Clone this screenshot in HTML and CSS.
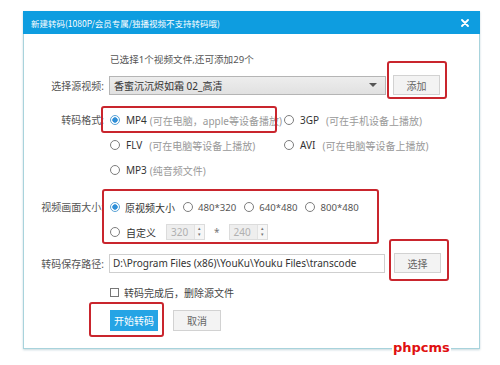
FILE: index.html
```html
<!DOCTYPE html>
<html lang="zh-CN">
<head>
  <meta charset="UTF-8" />
  <title>新建转码</title>
  <link rel="stylesheet" href="styles.css">
</head>
<body>

  <div class="dialog">
    <!-- Titelleiste -->
    <div class="titlebar">
      <span class="title">新建转码(1080P/会员专属/独播视频不支持转码哦)</span>
      <svg class="close" width="8" height="8" viewBox="0 0 8 8">
        <path d="M1 1 L7 7 M7 1 L1 7" stroke="#fff" stroke-width="1.8" stroke-linecap="round"/>
      </svg>
    </div>

    <div class="body">
      <div class="row info">
        <span class="label"></span>
        <span>已选择1个视频文件,还可添加29个</span>
      </div>

      <div class="row src">
        <span class="label">选择源视频:</span>
        <div class="select">
          <span>香蜜沉沉烬如霜 02_高清</span>
          <span class="caret"></span>
        </div>
        <button class="btn">添加</button>
      </div>

      <div class="row format">
        <span class="label">转码格式:</span>
        <div class="format-grid">
          <div class="opt"><span class="radio on"></span><span class="name">MP4</span><span class="hint">(可在电脑，apple等设备播放)</span></div>
          <div class="opt"><span class="radio"></span><span class="name">3GP</span><span class="hint wide">(可在手机设备上播放)</span></div>
          <div class="opt"><span class="radio"></span><span class="name">FLV</span><span class="hint wide">(可在电脑等设备上播放)</span></div>
          <div class="opt"><span class="radio"></span><span class="name">AVI</span><span class="hint wide">(可在电脑等设备上播放)</span></div>
          <div class="opt"><span class="radio"></span><span class="name">MP3</span><span class="hint">(纯音频文件)</span></div>
        </div>
      </div>

      <div class="row size">
        <span class="label">视频画面大小:</span>
        <div class="size-box">
          <div class="size-line">
            <div class="opt"><span class="radio on"></span><span class="name">原视频大小</span></div>
            <div class="opt"><span class="radio"></span><span class="dim">480*320</span></div>
            <div class="opt"><span class="radio"></span><span class="dim">640*480</span></div>
            <div class="opt"><span class="radio"></span><span class="dim">800*480</span></div>
          </div>
          <div class="size-line">
            <div class="opt"><span class="radio"></span><span class="name">自定义</span></div>
            <div class="spin"><span>320</span><span class="arrows">▴<br>▾</span></div>
            <span class="times">*</span>
            <div class="spin"><span>240</span><span class="arrows">▴<br>▾</span></div>
          </div>
        </div>
      </div>

      <div class="row path">
        <span class="label">转码保存路径:</span>
        <div class="input">D:\Program Files (x86)\YouKu\Youku Files\transcode</div>
        <button class="btn pick">选择</button>
      </div>

      <div class="row check">
        <span class="label"></span>
        <span class="box"></span>
        <span>转码完成后，删除源文件</span>
      </div>

      <div class="row actions">
        <span class="label"></span>
        <button class="btn primary">开始转码</button>
        <button class="btn">取消</button>
      </div>
    </div>

    <!-- rote Markierungen -->
    <div class="mark mark-add"></div>
    <div class="mark mark-format"></div>
    <div class="mark mark-size"></div>
    <div class="mark mark-pick"></div>
    <div class="mark mark-start"></div>
  </div>

  <div class="watermark">phpcms</div>

</body>
</html>
```

FILE: styles.css
```css
* {
  margin: 0;
  padding: 0;
  box-sizing: border-box;
}

body {
  font-family: "Noto Sans", "Noto Sans CJK SC", sans-serif;
  font-size: 10px;
  color: #555;
  background: #fff;
  width: 500px;
  height: 365px;
  position: relative;
  overflow: hidden;
}

.dialog {
  position: relative;
  margin: 11px 0 0 23px;
  width: 457px;
  height: 338px;
  border: 1px solid #a8d3dc;
  border-top: none;
  background: #fff;
  box-shadow: 0 1px 2px rgba(120, 160, 170, 0.4);
}

.titlebar {
  height: 23px;
  margin: 0 -1px;
  background: #0e9de0;
  display: flex;
  align-items: center;
  justify-content: space-between;
  padding: 0 11px 0 8px;
}

.title {
  color: #fff;
  font-size: 8.5px;
  font-family: "Noto Sans CJK SC", sans-serif;
}

.body {
  display: flex;
  flex-direction: column;
  padding-bottom: 17px;
}

.row {
  display: flex;
  align-items: center;
}

.label {
  width: 80px;
  flex-shrink: 0;
  text-align: right;
  margin-right: 5px;
  color: #555;
}

.info { height: 18px; margin-top: 16px; color: #555; font-size: 9.6px; }
.info .label { margin-right: 6px; }

.src { height: 20px; margin-top: 7px; }

.select {
  width: 277px;
  height: 19px;
  border: 1px solid #b5b5b5;
  background: linear-gradient(#ededed, #e1e1e1);
  display: flex;
  align-items: center;
  justify-content: space-between;
  padding: 0 8px 0 4px;
  color: #333;
}

.caret {
  width: 0;
  height: 0;
  border-left: 4px solid transparent;
  border-right: 4px solid transparent;
  border-top: 4px solid #555;
}

.btn {
  font-family: "Noto Sans CJK SC", sans-serif;
  font-size: 10px;
  width: 47px;
  height: 20px;
  margin-left: 7px;
  border: 1px solid #d2d2d2;
  background: #f3f3f3;
  color: #666;
}

.btn.pick { margin-left: 9px; }

.format { align-items: flex-start; margin-top: 15px; }
.format .label { line-height: 20px; margin-right: 6px; }

.format-grid {
  display: grid;
  grid-template-columns: 174px auto;
  grid-auto-rows: 20px;
  row-gap: 5px;
}

.opt {
  display: flex;
  align-items: center;
  white-space: nowrap;
}

.radio {
  width: 10px;
  height: 10px;
  border: 1px solid #7d7d7d;
  border-radius: 50%;
  margin-right: 6px;
  flex-shrink: 0;
  background: #fff;
}

.radio.on {
  border-color: #5aa3d6;
  background: radial-gradient(circle, #2f8fd8 0 2.4px, #fff 3px);
}

.name {
  color: #333;
}

.hint {
  color: #999;
  margin-left: 3px;
}

.hint.wide { margin-left: 7px; }

.size { align-items: flex-start; margin-top: 17px; }
.size .label { line-height: 20px; margin-right: 6px; }

.size-box {
  display: flex;
  flex-direction: column;
  gap: 5px;
}

.size-line {
  display: flex;
  align-items: center;
  height: 20px;
  gap: 8px;
}

.size-line:first-child .radio { margin-right: 5px; }
.size-line:first-child .dim { font-size: 9.6px; }

.dim { color: #555; }

.spin {
  width: 39px;
  height: 16px;
  background: #eeeeee;
  border: 1px solid #dcdcdc;
  display: flex;
  align-items: center;
  justify-content: space-between;
  padding-left: 4px;
  color: #b0b0b0;
}

.size-line .opt + .spin { margin-left: 2px; }

.arrows {
  width: 10px;
  height: 14px;
  font-size: 5px;
  line-height: 6px;
  text-align: center;
  color: #777;
  border-left: 1px solid #e2e2e2;
  background: #f6f6f6;
}

.times {
  color: #777;
  margin: 0 1px;
}

.path { height: 20px; margin-top: 11px; }

.input {
  width: 276px;
  height: 19px;
  border: 1px solid #cfcfcf;
  background: #fff;
  color: #333;
  padding-left: 3px;
  line-height: 17px;
  white-space: nowrap;
  overflow: hidden;
}

.check { height: 18px; margin-top: 10px; color: #444; }
.check .label { margin-right: 6px; }

.box {
  width: 9px;
  height: 9px;
  border: 1px solid #777;
  margin-right: 5px;
}

.actions { height: 21px; margin-top: 9px; }
.actions .label { margin-right: 6px; }

.actions .btn {
  height: 21px;
  width: 48px;
  margin-left: 0;
}

.actions .btn + .btn { margin-left: 15px; }

.btn.primary {
  background: #25a4e5;
  border-color: #25a4e5;
  color: #fff;
}

.mark {
  position: absolute;
  border: 2px solid #c9252d;
  border-radius: 3px;
}

.mark-add { left: 363px; top: 50px; width: 60px; height: 38px; }
.mark-format { left: 77px; top: 95px; width: 176px; height: 27px; }
.mark-size { left: 78px; top: 178px; width: 277px; height: 55px; }
.mark-pick { left: 365px; top: 228px; width: 60px; height: 42px; }
.mark-start { left: 65px; top: 291px; width: 75px; height: 35px; }

.watermark {
  position: absolute;
  left: 392px;
  top: 341px;
  padding: 0 1px;
  background: #fff;
  color: #e01010;
  font-family: "DejaVu Sans", sans-serif;
  font-weight: bold;
  font-size: 13px;
  line-height: 14px;
}
```
